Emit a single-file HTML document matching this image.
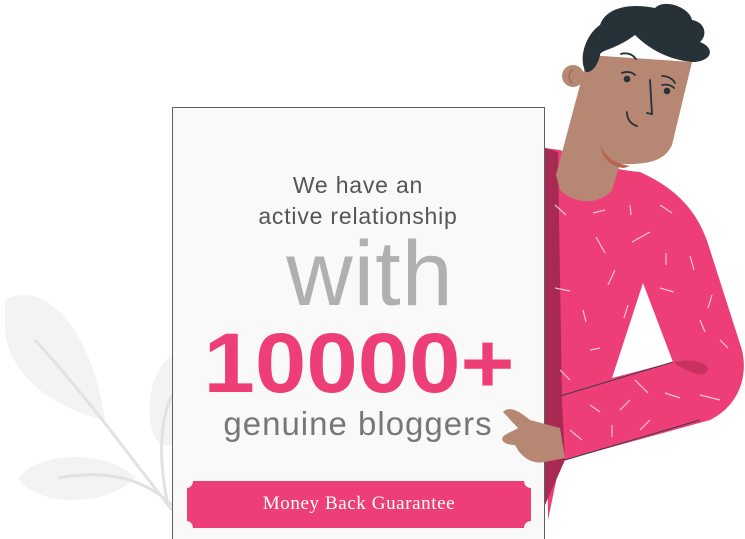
<!DOCTYPE html>
<html><head><style>
html,body{margin:0;padding:0;width:745px;height:539px;overflow:hidden;background:#fff;}
.t{position:absolute;left:172px;width:372px;text-align:center;font-family:"Liberation Sans",sans-serif;white-space:nowrap;}
</style></head><body>
<svg width="745" height="539" style="position:absolute;left:0;top:0">
 <g fill="#f3f3f3">
  <path d="M5,300 C40,280 90,320 105,420 C60,410 10,380 5,330 Z"/>
  <path d="M18,478 C40,450 110,450 135,478 C110,505 40,510 18,478 Z"/>
  <path d="M172,355 C150,370 140,420 160,445 L172,445 Z"/>
 </g>
 <g stroke="#e2e2e2" stroke-width="3" fill="none">
  <path d="M35,340 C90,400 140,470 172,510"/>
  <path d="M58,478 C100,470 140,475 172,505"/>
  <path d="M172,395 C160,420 158,460 168,505"/>
 </g>
 <path d="M545,148 L560,150 C590,165 620,170 640,172 C680,190 700,215 710,250 L742,350 C748,375 740,405 710,420 L565,460 L560,462 L548,520 Z" fill="#ee3e78"/>
 <path d="M643,283 L673,362 L612,378 Z" fill="#fff"/>
 <path d="M547,400 L673,362" stroke="#3b3b4b" stroke-width="1"/>
 <path d="M565,460 L700,420" stroke="#3b3b4b" stroke-width="1"/>
 <path d="M675,362 C690,358 712,362 707,372 C700,378 690,372 675,364 Z" fill="#c9325f"/>
 <path d="M545,148 L558,152 L562,400 L565,460 L545,505 Z" fill="#a82a53"/>
 <g stroke="#ffffff" stroke-opacity=".7" stroke-width="1.2">
  <path d="M555,205 L566,215"/><path d="M593,213 L605,210"/><path d="M630,205 L631,215"/><path d="M660,205 L672,213"/>
  <path d="M596,237 L605,253"/><path d="M632,242 L650,232"/><path d="M666,253 L666,265"/><path d="M690,256 L694,270"/>
  <path d="M555,288 L570,291"/><path d="M608,285 L615,270"/><path d="M660,288 L674,292"/><path d="M712,295 L708,308"/>
  <path d="M583,310 L586,322"/><path d="M628,305 L624,318"/><path d="M590,350 L600,348"/><path d="M700,320 L705,332"/>
  <path d="M560,370 L570,380"/><path d="M720,340 L728,348"/><path d="M635,380 L648,393"/><path d="M665,393 L680,398"/>
  <path d="M590,405 L600,412"/><path d="M620,410 L630,400"/><path d="M612,425 L612,437"/><path d="M700,395 L720,400"/>
  <path d="M570,430 L582,440"/><path d="M640,430 L650,420"/>
 </g>
 <path d="M588,55 L692,62 L672,145 C665,160 650,165 620,164 L612,190 C600,205 575,205 560,190 L556,175 Z" fill="#b68873"/>
 <path d="M600,145 C606,158 616,164 630,166 L624,168 C612,167 603,160 600,145 Z" fill="#b5644e"/>
 <circle cx="573" cy="76" r="11" fill="#b68873"/>
 <path d="M573,70 C568,72 568,80 572,83" stroke="#a66a55" stroke-width="1.5" fill="none"/>
 <path d="M586,72 C578,60 585,35 600,25 C605,10 625,2 655,8 C665,-2 690,8 692,20 C705,22 708,35 700,42 C716,48 712,62 692,62 C670,60 650,50 635,35 C615,50 600,50 600,55 C598,65 592,73 586,72 Z" fill="#263238"/>
 <g fill="#263238"><circle cx="627" cy="79" r="3.3"/><circle cx="667" cy="91" r="3.3"/></g>
 <g stroke="#263238" stroke-width="1.8" fill="none" stroke-linecap="round">
  <path d="M621,54 C628,52 633,55 636,59"/><path d="M662,76 C668,76 673,79 675,83"/>
  <path d="M622,73 C627,71 632,72 635,75"/><path d="M662,85 C667,84 671,85 674,88"/>
  <path d="M650,80 L652,114 L647,113"/><path d="M627,112 C627,120 631,124 637,126"/>
 </g>
 <rect x="172.5" y="107.5" width="372" height="432" fill="#f9f9f9" stroke="#5a6068" stroke-width="1"/>
 <path d="M503,412 C510,405 520,412 530,420 L545,424 L545,462 C530,465 520,455 515,445 C505,445 498,440 505,435 C510,432 515,430 518,428 Z" fill="#b68873"/>
 <path d="M545,424 L560,428 L565,458 L545,462 Z" fill="#b68873"/>
 <path d="M193,481 L524,481 C524,485 527,488 531,488 L531,521 C527,521 524,524 524,528 L193,528 C193,524 190,521 187,521 L187,488 C190,488 193,485 193,481 Z" fill="#ee3e78"/>
</svg>
<div class="t" style="top:172px;font-size:23px;color:#555;letter-spacing:.8px">We have an</div>
<div class="t" style="top:203px;font-size:23px;color:#555;letter-spacing:.8px">active relationship</div>
<div class="t" style="top:228px;font-size:92px;color:#b0b0b0;line-height:92px;letter-spacing:1px;left:184px">with</div>
<div class="t" style="top:318px;font-size:84px;color:#ee3e78;font-weight:bold;line-height:90px;transform:scaleX(1.1);left:173px">10000+</div>
<div class="t" style="top:405px;font-size:33px;color:#777;letter-spacing:1px;left:172px">genuine bloggers</div>
<div class="t" style="top:493px;font-size:19px;color:#fff;font-family:'Liberation Serif',serif;left:187px;width:344px;letter-spacing:.6px">Money Back Guarantee</div>
</body></html>
